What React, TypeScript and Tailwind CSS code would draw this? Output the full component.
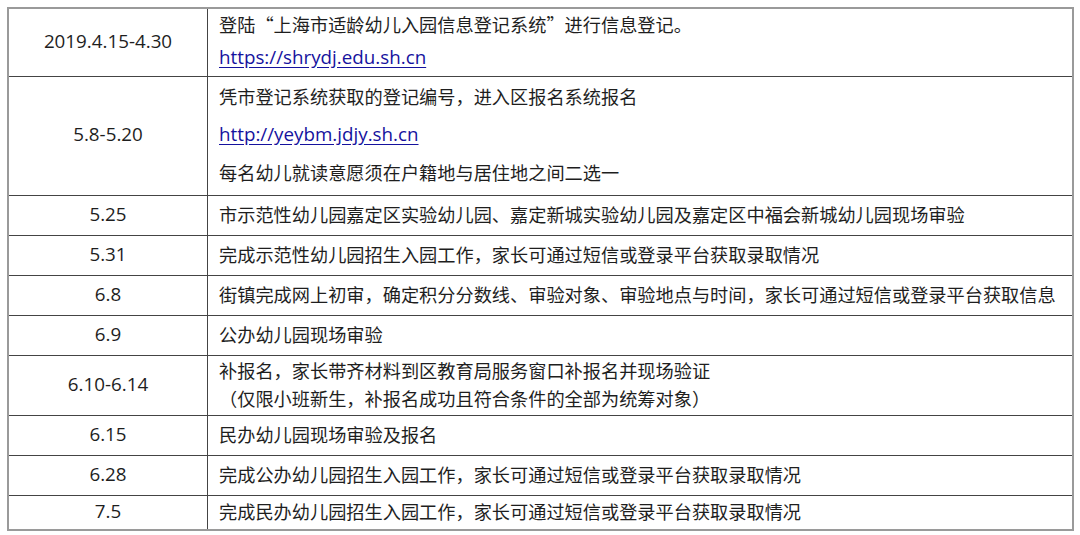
const latin = { fontFamily: '"Open Sans", "Noto Sans CJK SC", sans-serif' };
const cjk = { fontFamily: '"Noto Sans CJK SC", "Open Sans", sans-serif' };

type Row = { date: string; h: string; lines: { text: string; link?: boolean }[]; gap?: string };

const rows: Row[] = [
  {
    date: "2019.4.15-4.30",
    h: "h-[67px]",
    gap: "gap-[7px]",
    lines: [
      { text: "登陆“上海市适龄幼儿入园信息登记系统”进行信息登记。" },
      { text: "https://shrydj.edu.sh.cn", link: true },
    ],
  },
  {
    date: "5.8-5.20",
    h: "h-[119px]",
    gap: "gap-[12px]",
    lines: [
      { text: "凭市登记系统获取的登记编号，进入区报名系统报名" },
      { text: "http://yeybm.jdjy.sh.cn", link: true },
      { text: "每名幼儿就读意愿须在户籍地与居住地之间二选一" },
    ],
  },
  { date: "5.25", h: "h-[40px]", lines: [{ text: "市示范性幼儿园嘉定区实验幼儿园、嘉定新城实验幼儿园及嘉定区中福会新城幼儿园现场审验" }] },
  { date: "5.31", h: "h-[40px]", lines: [{ text: "完成示范性幼儿园招生入园工作，家长可通过短信或登录平台获取录取情况" }] },
  { date: "6.8", h: "h-[40px]", lines: [{ text: "街镇完成网上初审，确定积分分数线、审验对象、审验地点与时间，家长可通过短信或登录平台获取信息" }] },
  { date: "6.9", h: "h-[40px]", lines: [{ text: "公办幼儿园现场审验" }] },
  {
    date: "6.10-6.14",
    h: "h-[60px]",
    gap: "gap-[2px]",
    lines: [
      { text: "补报名，家长带齐材料到区教育局服务窗口补报名并现场验证" },
      { text: "（仅限小班新生，补报名成功且符合条件的全部为统筹对象）" },
    ],
  },
  { date: "6.15", h: "h-[40px]", lines: [{ text: "民办幼儿园现场审验及报名" }] },
  { date: "6.28", h: "h-[40px]", lines: [{ text: "完成公办幼儿园招生入园工作，家长可通过短信或登录平台获取录取情况" }] },
  { date: "7.5", h: "h-[34px]", lines: [{ text: "完成民办幼儿园招生入园工作，家长可通过短信或登录平台获取录取情况" }] },
];

export default function App() {
  return (
    <div className="w-[1080px] h-[535px] bg-white pt-[7px] pl-[7px] overflow-hidden">
      <div className="w-[1067px] border-2 border-[#9a9a9a] text-[#1e1e1e] leading-[26px]">
        {rows.map((r, i) => (
          <div key={i} className={`flex ${r.h} ${i > 0 ? "border-t border-[#444]" : ""}`}>
            <div
              className="w-[199px] shrink-0 border-r border-[#444] flex items-center justify-center pb-[4px] text-[18.8px]"
              style={latin}
            >
              {r.date}
            </div>
            <div className={`flex-1 flex flex-col justify-center pl-[11px] pb-[4px] ${r.gap ?? ""}`}>
              {r.lines.map((l, j) =>
                l.link ? (
                  <a
                    key={j}
                    href="#"
                    className="text-[#15129e] text-[18.8px] underline underline-offset-[3px] w-fit"
                    style={latin}
                  >
                    {l.text}
                  </a>
                ) : (
                  <div key={j} className="whitespace-nowrap text-[18.2px]" style={cjk}>
                    {l.text}
                  </div>
                )
              )}
            </div>
          </div>
        ))}
      </div>
    </div>
  );
}
